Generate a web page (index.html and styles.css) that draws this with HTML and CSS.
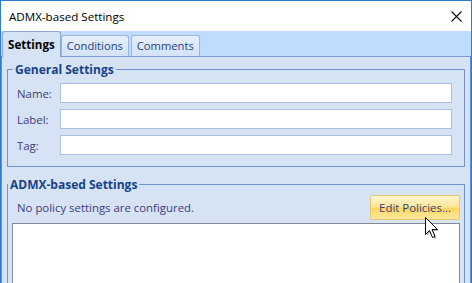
FILE: index.html
```html
<!DOCTYPE html>
<html lang="en">
<head>
  <meta charset="UTF-8">
  <title>ADMX-based Settings</title>
  <link rel="stylesheet" href="styles.css">
</head>
<body>
<div class="window">
  <div class="titlebar">
    <span class="title">ADMX-based Settings</span>
    <svg class="close" width="11" height="11" viewBox="0 0 11 11">
      <path d="M0.5 0.5 L10.5 10.5 M10.5 0.5 L0.5 10.5" stroke="#111" stroke-width="1.1" fill="none"/>
    </svg>
  </div>
  <div class="tabs">
    <div class="tab active">Settings</div>
    <div class="tab">Conditions</div>
    <div class="tab">Comments</div>
  </div>
  <div class="panel">
    <fieldset class="group">
      <legend>General Settings</legend>
      <div class="fields">
        <label>Name:</label><input type="text">
        <label>Label:</label><input type="text">
        <label>Tag:</label><input type="text">
      </div>
    </fieldset>
    <fieldset class="group admx">
      <legend>ADMX-based Settings</legend>
      <div class="status-row">
        <span class="status">No policy settings are configured.</span>
        <button type="button" class="edit-btn">Edit Policies...</button>
      </div>
      <div class="listbox"></div>
    </fieldset>
  </div>
  <svg class="cursor" width="16" height="24" viewBox="0 0 16 24">
    <path d="M1.5 1.5 L1.5 18.5 L5.5 14.5 L8.5 21.5 L11 20.5 L8 13.5 L13.5 13.5 Z" fill="#000" opacity="0.25" transform="translate(1.5 1.5)"/>
    <path d="M1.5 1.5 L1.5 18.5 L5.5 14.5 L8.5 21.5 L11 20.5 L8 13.5 L13.5 13.5 Z" fill="#fff" stroke="#000" stroke-width="1"/>
  </svg>
</div>
</body>
</html>
```

FILE: styles.css
```css
html, body { margin: 0; padding: 0; background: #fff; }
body { font-family: "Open Sans", "Noto Sans", Arial, sans-serif; font-size: 11.4px; }
.window { position: relative; width: 472px; height: 283px; border: 1px solid #2b7bd3; border-bottom: none; box-sizing: border-box; overflow: hidden; background: #d6e3f5; }
.titlebar { height: 30px; background: #fff; display: flex; align-items: center; justify-content: space-between; padding: 0 9px 0 8px; color: #000; font-size: 11.6px; }
.tabs { height: 25px; background: #bfdbfe; display: flex; align-items: flex-end; padding-left: 1px; }
.tab { height: 21px; line-height: 19px; padding: 0 5px; border: 1px solid #9db5da; border-bottom: none; border-radius: 3px 3px 0 0; background: linear-gradient(#e6effb, #d3e2f5); color: #1e3f86; box-sizing: border-box; font-size: 11.2px; }
.tab.active { height: 26px; line-height: 25px; margin-bottom: -1px; background: #d6e3f5; border-color: #8aa7d5; color: #000; font-weight: 700; font-size: 11.6px; position: relative; z-index: 1; }
.tab:last-child { margin-left: 2px; }
.panel { border-top: 1px solid #7b9dd2; border-left: 1px solid #5f8fd2; border-right: 1px solid #5f8fd2; padding: 5px 5px 0 5px; }
.group { margin: 0; border: 1px solid #6e93cf; border-radius: 0; padding: 0 12px 11px 9px; }
.group legend { margin-left: -4px; padding: 0 2px; font-weight: 700; font-size: 12px; line-height: 15px; color: #15428b; }
.fields { display: grid; grid-template-columns: 43px 1fr; row-gap: 6px; margin-top: 6px; align-items: center; }
.fields label { color: #3d3b7e; }
.fields input { height: 20px; box-sizing: border-box; border: 1px solid #a9c0e0; background: #fff; margin: 0; padding: 0 3px; font: inherit; outline: none; }
.admx { margin-top: 10px; padding: 0 4px 0 4px; }
.status-row { display: flex; align-items: center; justify-content: space-between; margin-top: 3px; }
.status { padding-left: 5px; color: #3d3b7e; }
.edit-btn { width: 90px; height: 25px; border: 1px solid #e9c56e; border-radius: 2px; background: linear-gradient(#fff6d2 0%, #ffe79a 45%, #ffd65e 55%, #ffe8a0 100%); color: #283f84; font: inherit; padding: 0; }
.listbox { margin-top: 3px; height: 80px; background: #fff; border: 1px solid #838a94; }
.cursor { position: absolute; left: 423px; top: 215px; }
```
